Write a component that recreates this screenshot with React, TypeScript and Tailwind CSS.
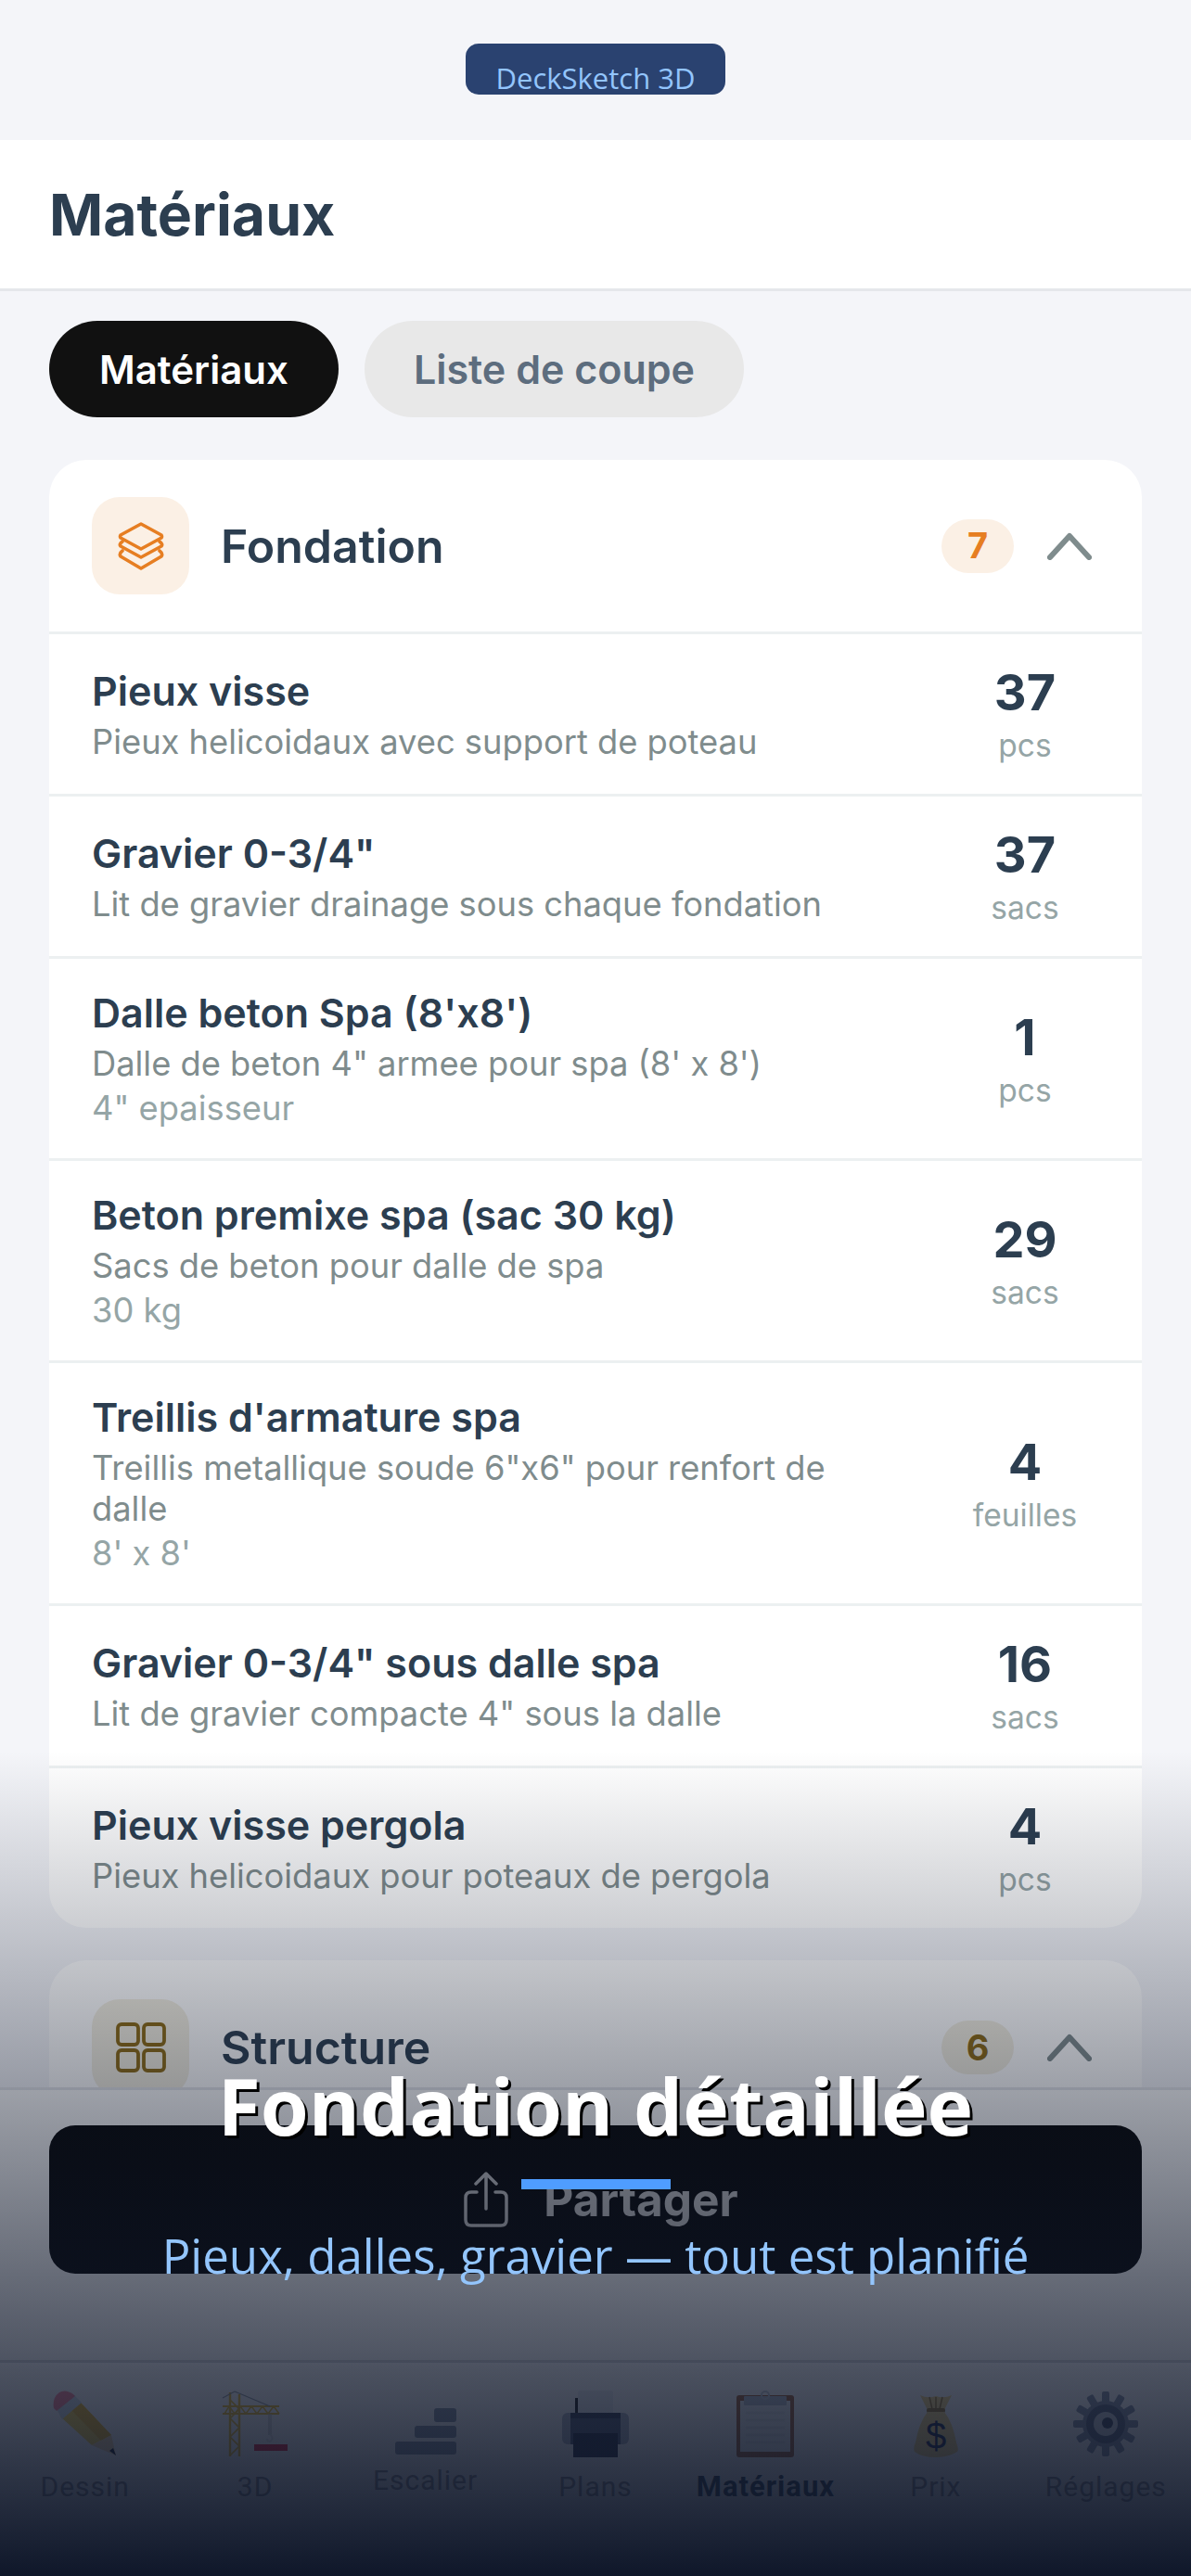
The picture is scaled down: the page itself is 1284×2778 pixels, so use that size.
import React from "react";

type RowData = { title: string; sub: string[]; extra?: string; qty: string; unit: string };

const rows: RowData[] = [
  { title: "Pieux visse", sub: ["Pieux helicoidaux avec support de poteau"], qty: "37", unit: "pcs" },
  { title: 'Gravier 0-3/4"', sub: ["Lit de gravier drainage sous chaque fondation"], qty: "37", unit: "sacs" },
  { title: "Dalle beton Spa (8'x8')", sub: ["Dalle de beton 4\" armee pour spa (8' x 8')"], extra: '4" epaisseur', qty: "1", unit: "pcs" },
  { title: "Beton premixe spa (sac 30 kg)", sub: ["Sacs de beton pour dalle de spa"], extra: "30 kg", qty: "29", unit: "sacs" },
  { title: "Treillis d'armature spa", sub: ['Treillis metallique soude 6"x6" pour renfort de dalle'], extra: "8' x 8'", qty: "4", unit: "feuilles" },
  { title: 'Gravier 0-3/4" sous dalle spa', sub: ['Lit de gravier compacte 4" sous la dalle'], qty: "16", unit: "sacs" },
  { title: "Pieux visse pergola", sub: ["Pieux helicoidaux pour poteaux de pergola"], qty: "4", unit: "pcs" },
];

function Chevron() {
  return (
    <svg width="48" height="30" viewBox="0 0 48 30" fill="none" stroke="#7f8c8d" strokeWidth="6" strokeLinecap="round" strokeLinejoin="round">
      <path d="M3 27 L24 4 L45 27" />
    </svg>
  );
}

function LayersIcon() {
  return (
    <svg width="50" height="52" viewBox="0 0 50 52" fill="none" stroke="#e67e22" strokeWidth="3.6" strokeLinejoin="round" strokeLinecap="round">
      <path d="M25 2 L47 14 Q48 16 47 17 L25 29 L3 17 Q2 16 3 14 Z" />
      <path d="M5 21 Q1 24 3 26 L25 38 L47 26 Q49 24 45 21" />
      <path d="M5 31 Q1 34 3 37 L25 50 L47 37 Q49 34 45 31" />
    </svg>
  );
}

function GridIcon() {
  return (
    <svg width="54" height="54" viewBox="0 0 54 54" fill="none" stroke="#8b6914" strokeWidth="3.8">
      <rect x="2" y="2" width="22" height="22" rx="4" />
      <rect x="30" y="2" width="22" height="22" rx="4" />
      <rect x="2" y="30" width="22" height="22" rx="4" />
      <rect x="30" y="30" width="22" height="22" rx="4" />
    </svg>
  );
}

function Pencil() {
  return (
    <svg width="70" height="72" viewBox="0 0 70 72">
      <path d="M8 28 L29 12 L63 48 L42 59 Z" fill="#ffdc55" />
      <path d="M19 20 L29 12 L63 48 L52 54 Z" fill="#f5bf30" />
      <path d="M42 59 L63 48 L68 70 Z" fill="#f8dcae" />
      <path d="M61 65 L65 62 L68 70 Z" fill="#141a30" />
      <path d="M4 20 L23 5 L31 13 L10 31 Z" fill="#d7e3ee" />
      <path d="M1 19 Q-1 8 7 2 Q14 -2 22 4 L24 6 L4 22 Z" fill="#ff8aa0" />
    </svg>
  );
}

function Crane() {
  return (
    <svg width="72" height="72" viewBox="0 0 72 72" fill="none">
      <path d="M9 71 V2 M19 71 V4" stroke="#f2c230" strokeWidth="2.4" />
      <path d="M9 70 L19 60 L9 50 L19 40 L9 30 L19 20 L9 10" stroke="#f2c230" strokeWidth="1.6" />
      <path d="M1 17 H62 M1 25 H62" stroke="#f2c230" strokeWidth="2.2" />
      <path d="M3 25 L8 17 L14 25 L20 17 L26 25 L32 17 L38 25 L44 17 L50 25 L56 17 L62 25" stroke="#f2c230" strokeWidth="1.5" />
      <path d="M14 1 L52 17" stroke="#9aa0a8" strokeWidth="1.2" />
      <path d="M1 8 L14 1" stroke="#9aa0a8" strokeWidth="1.2" />
      <path d="M51 25 V48 M53 25 V48" stroke="#c8c8c8" strokeWidth="1.2" />
      <path d="M52 47 Q57 52 52 55 Q49 55 49 52" stroke="#e8e8e8" strokeWidth="2" />
      <rect x="35" y="58" width="36" height="7" fill="#e3223a" />
    </svg>
  );
}

function Stairs() {
  return (
    <svg width="66" height="50" viewBox="0 0 66 50" fill="#8e99ab">
      <rect x="42" y="0" width="24" height="15" rx="3" />
      <rect x="21" y="19" width="45" height="13" rx="3" />
      <rect x="0" y="36" width="66" height="14" rx="3" />
    </svg>
  );
}

function Printer() {
  return (
    <svg width="72" height="72" viewBox="0 0 72 72">
      <rect x="17" y="0" width="38" height="30" rx="2" fill="#eef1f5" />
      <rect x="14" y="8" width="3" height="22" fill="#222" />
      <rect x="0" y="24" width="72" height="34" rx="6" fill="#b4bbca" />
      <rect x="9" y="24" width="54" height="34" fill="#57617a" />
      <rect x="9" y="24" width="54" height="6" fill="#3a4259" />
      <rect x="12" y="46" width="48" height="26" fill="#2b3248" />
    </svg>
  );
}

function Clipboard() {
  return (
    <svg width="62" height="72" viewBox="0 0 62 72">
      <rect x="0" y="5" width="62" height="67" rx="3" fill="#a5673f" />
      <rect x="4" y="11" width="54" height="55" fill="#eef1f4" />
      <path d="M10 24 H52 M10 32 H52 M10 40 H52 M10 48 H52 M10 56 H52" stroke="#e0e3e8" strokeWidth="3" />
      <rect x="8" y="6" width="46" height="10" rx="1" fill="#b9c2cf" />
      <circle cx="31" cy="5" r="4" fill="none" stroke="#c7ced8" strokeWidth="2" />
    </svg>
  );
}

function Bag() {
  return (
    <svg width="50" height="68" viewBox="0 0 50 68">
      <path d="M8 1 Q16 5 25 2 Q34 5 42 1 L34 17 L16 17 Z" fill="#f6d987" />
      <path d="M18 3 L21 16 M32 3 L29 16 M25 3 V16" stroke="#a37f35" strokeWidth="1.5" />
      <rect x="15" y="15" width="20" height="5" rx="2" fill="#a37f35" />
      <path d="M16 19 H34 Q43 30 47 52 Q50 60 48 62 Q38 68 25 68 Q10 68 2 62 Q0 58 3 52 Q7 30 16 19 Z" fill="#f6d987" />
      <text x="25" y="59" textAnchor="middle" fontFamily="Liberation Sans" fontSize="40" fill="#1d2a52">$</text>
    </svg>
  );
}

function Gear() {
  return (
    <svg width="70" height="72" viewBox="0 0 70 72">
      <g fill="#8d97ab">
        {[0, 30, 60, 90, 120, 150, 180, 210, 240, 270, 300, 330].map((a) => (
          <rect key={a} x="31" y="1" width="8" height="13" rx="2" transform={`rotate(${a} 35 36)`} />
        ))}
      </g>
      <circle cx="35" cy="36" r="25" fill="#8d97ab" />
      <circle cx="35" cy="36" r="21" fill="#616b82" />
      <circle cx="35" cy="36" r="13" fill="#c9ced8" />
      <circle cx="37" cy="35" r="6" fill="#434c63" />
    </svg>
  );
}

const tabs = [
  { label: "Dessin", icon: <Pencil />, box: "h-[71px] mb-[14px]", active: false },
  { label: "3D", icon: <Crane />, box: "h-[71px] mb-[14px]", active: false },
  { label: "Escalier", icon: <Stairs />, box: "h-[68px] mb-[10px]", active: false },
  { label: "Plans", icon: <Printer />, box: "h-[71px] mb-[14px]", active: false },
  { label: "Matériaux", icon: <Clipboard />, box: "h-[71px] mb-[14px]", active: true },
  { label: "Prix", icon: <Bag />, box: "h-[71px] mb-[14px]", active: false },
  { label: "Réglages", icon: <Gear />, box: "h-[71px] mb-[14px]", active: false },
];

function Row({ r, last }: { r: RowData; last: boolean }) {
  return (
    <div className={`flex items-center pl-[46px] pr-[46px] pt-[33px] pb-[32px] ${last ? "" : "border-b-[3px] border-[#ecf0f1]"}`}>
      <div className="flex-1 min-w-0 pr-[80px]">
        <div className="text-[43px] leading-[51px] font-semibold text-[#2c3e50]">{r.title}</div>
        <div className="mt-[7px] text-[36.3px] leading-[44px] text-[#7f8c8d]">{r.sub[0]}</div>
        {r.extra && <div className="mt-[4px] text-[36.3px] leading-[44px] text-[#95a5a6]">{r.extra}</div>}
      </div>
      <div className="w-[160px] text-center shrink-0 translate-y-[2px]">
        <div className="text-[54px] leading-[56px] font-bold text-[#2c3e50]">{r.qty}</div>
        <div className="mt-[7px] text-[33.5px] leading-[44px] text-[#95a5a6]">{r.unit}</div>
      </div>
    </div>
  );
}

function CardHeader({ icon, title, count, tone, border }: { icon: React.ReactNode; title: string; count: string; tone: "orange" | "brown"; border: boolean }) {
  const box = tone === "orange" ? "bg-[#fbf0e5]" : "bg-[#f3efe2]";
  const num = tone === "orange" ? "text-[#e67e22]" : "text-[#8b6914]";
  return (
    <div className={`flex items-center h-[188px] pl-[46px] pr-[54px] shrink-0 ${border ? "border-b-[3px] border-[#ecf0f1]" : ""}`}>
      <div className={`w-[105px] h-[105px] rounded-[30px] flex items-center justify-center shrink-0 ${box}`}>{icon}</div>
      <div className="ml-[34px] flex-1 text-[50px] leading-[60px] font-semibold text-[#2c3e50]">{title}</div>
      <div className={`w-[78px] h-[58px] rounded-full flex items-center justify-center text-[38px] font-bold ${box} ${num}`}>{count}</div>
      <div className="ml-[36px] flex items-center"><Chevron /></div>
    </div>
  );
}

export default function App() {
  return (
    <div className="relative w-[1284px] h-[2778px] overflow-hidden flex flex-col bg-[#f4f5f9] font-['Inter',sans-serif]">
      <div className="h-[151px] shrink-0 pt-[47px] flex justify-center">
        <div className="w-[280px] h-[55px] rounded-[14px] bg-[#2a4270] text-[#93c5fd] flex items-end justify-center text-[31px] leading-[36px] font-['Open_Sans',sans-serif]">
          DeckSketch 3D
        </div>
      </div>
      <div className="h-[163px] shrink-0 bg-white border-b-[3px] border-[#e5e7eb] flex items-center pl-[53px]">
        <div className="text-[62.5px] leading-[80px] font-bold text-[#2c3e50]">Matériaux</div>
      </div>
      <div className="flex-1 min-h-0 overflow-hidden px-[53px] pt-[32px]">
        <div className="flex gap-[28px]">
          <div className="h-[104px] px-[54px] rounded-full bg-[#111111] text-white text-[42px] font-semibold flex items-center">Matériaux</div>
          <div className="h-[104px] px-[53px] rounded-full bg-[#e8e8e8] text-[#5d6d7e] text-[43px] font-semibold flex items-center">Liste de coupe</div>
        </div>
        <div className="mt-[46px] rounded-[40px] bg-white overflow-hidden flex flex-col">
          <CardHeader icon={<LayersIcon />} title="Fondation" count="7" tone="orange" border />
          {rows.map((r, i) => (
            <Row key={r.title} r={r} last={i === rows.length - 1} />
          ))}
        </div>
        <div className="mt-[35px] rounded-[40px] bg-white overflow-hidden flex flex-col">
          <CardHeader icon={<GridIcon />} title="Structure" count="6" tone="brown" border={false} />
        </div>
      </div>
      <div className="h-[294px] shrink-0 bg-white border-t-[3px] border-[#e5e7eb] px-[53px] pt-[38px]">
        <div className="h-[160px] pl-[12px] rounded-[28px] bg-[#050505] flex items-center justify-center gap-[38px] text-[#c8c8c8]">
          <svg width="48" height="60" viewBox="0 0 48 60" fill="none" stroke="#c8c8c8" strokeWidth="3.5" strokeLinecap="round" strokeLinejoin="round">
            <path d="M24 40 V3 M13 13 L24 2 L35 13" />
            <path d="M14 22 H8 Q2 22 2 28 V52 Q2 58 8 58 H40 Q46 58 46 52 V28 Q46 22 40 22 H34" />
          </svg>
          <div className="text-[49.5px] leading-[56px] font-bold">Partager</div>
        </div>
      </div>
      <div className="h-[233px] shrink-0 bg-white border-t-[3px] border-[#d8dade] grid grid-cols-7 pt-[31px]">
        {tabs.map((t) => (
          <div key={t.label} className="flex flex-col items-center">
            <div className={`flex items-end justify-center ${t.box}`}>{t.icon}</div>
            <div className={`font-['Roboto',sans-serif] leading-[36px] tracking-[1px] ${t.active ? "text-[31px] font-bold text-[#2c3e50]" : "text-[30px] text-[#8e8e93]"}`}>{t.label}</div>
          </div>
        ))}
      </div>

      {/* Caption video overlay */}
      <div className="absolute inset-0 bg-[linear-gradient(to_bottom,rgba(15,23,42,0)_68%,rgba(15,23,42,1)_100%)]" />
      <div className="absolute left-0 right-0 top-[2209px] flex flex-col items-center font-['Open_Sans',sans-serif]">
        <div className="text-[84px] leading-[124px] font-bold text-white [text-shadow:3px_3px_0_#000]">Fondation détaillée</div>
        <div className="mt-[17px] w-[161px] h-[11px] bg-[#4f9dff]" />
        <div className="mt-[35px] text-[51px] leading-[72px] text-[#93c5fd]">Pieux, dalles, gravier — tout est planifié</div>
      </div>
    </div>
  );
}
